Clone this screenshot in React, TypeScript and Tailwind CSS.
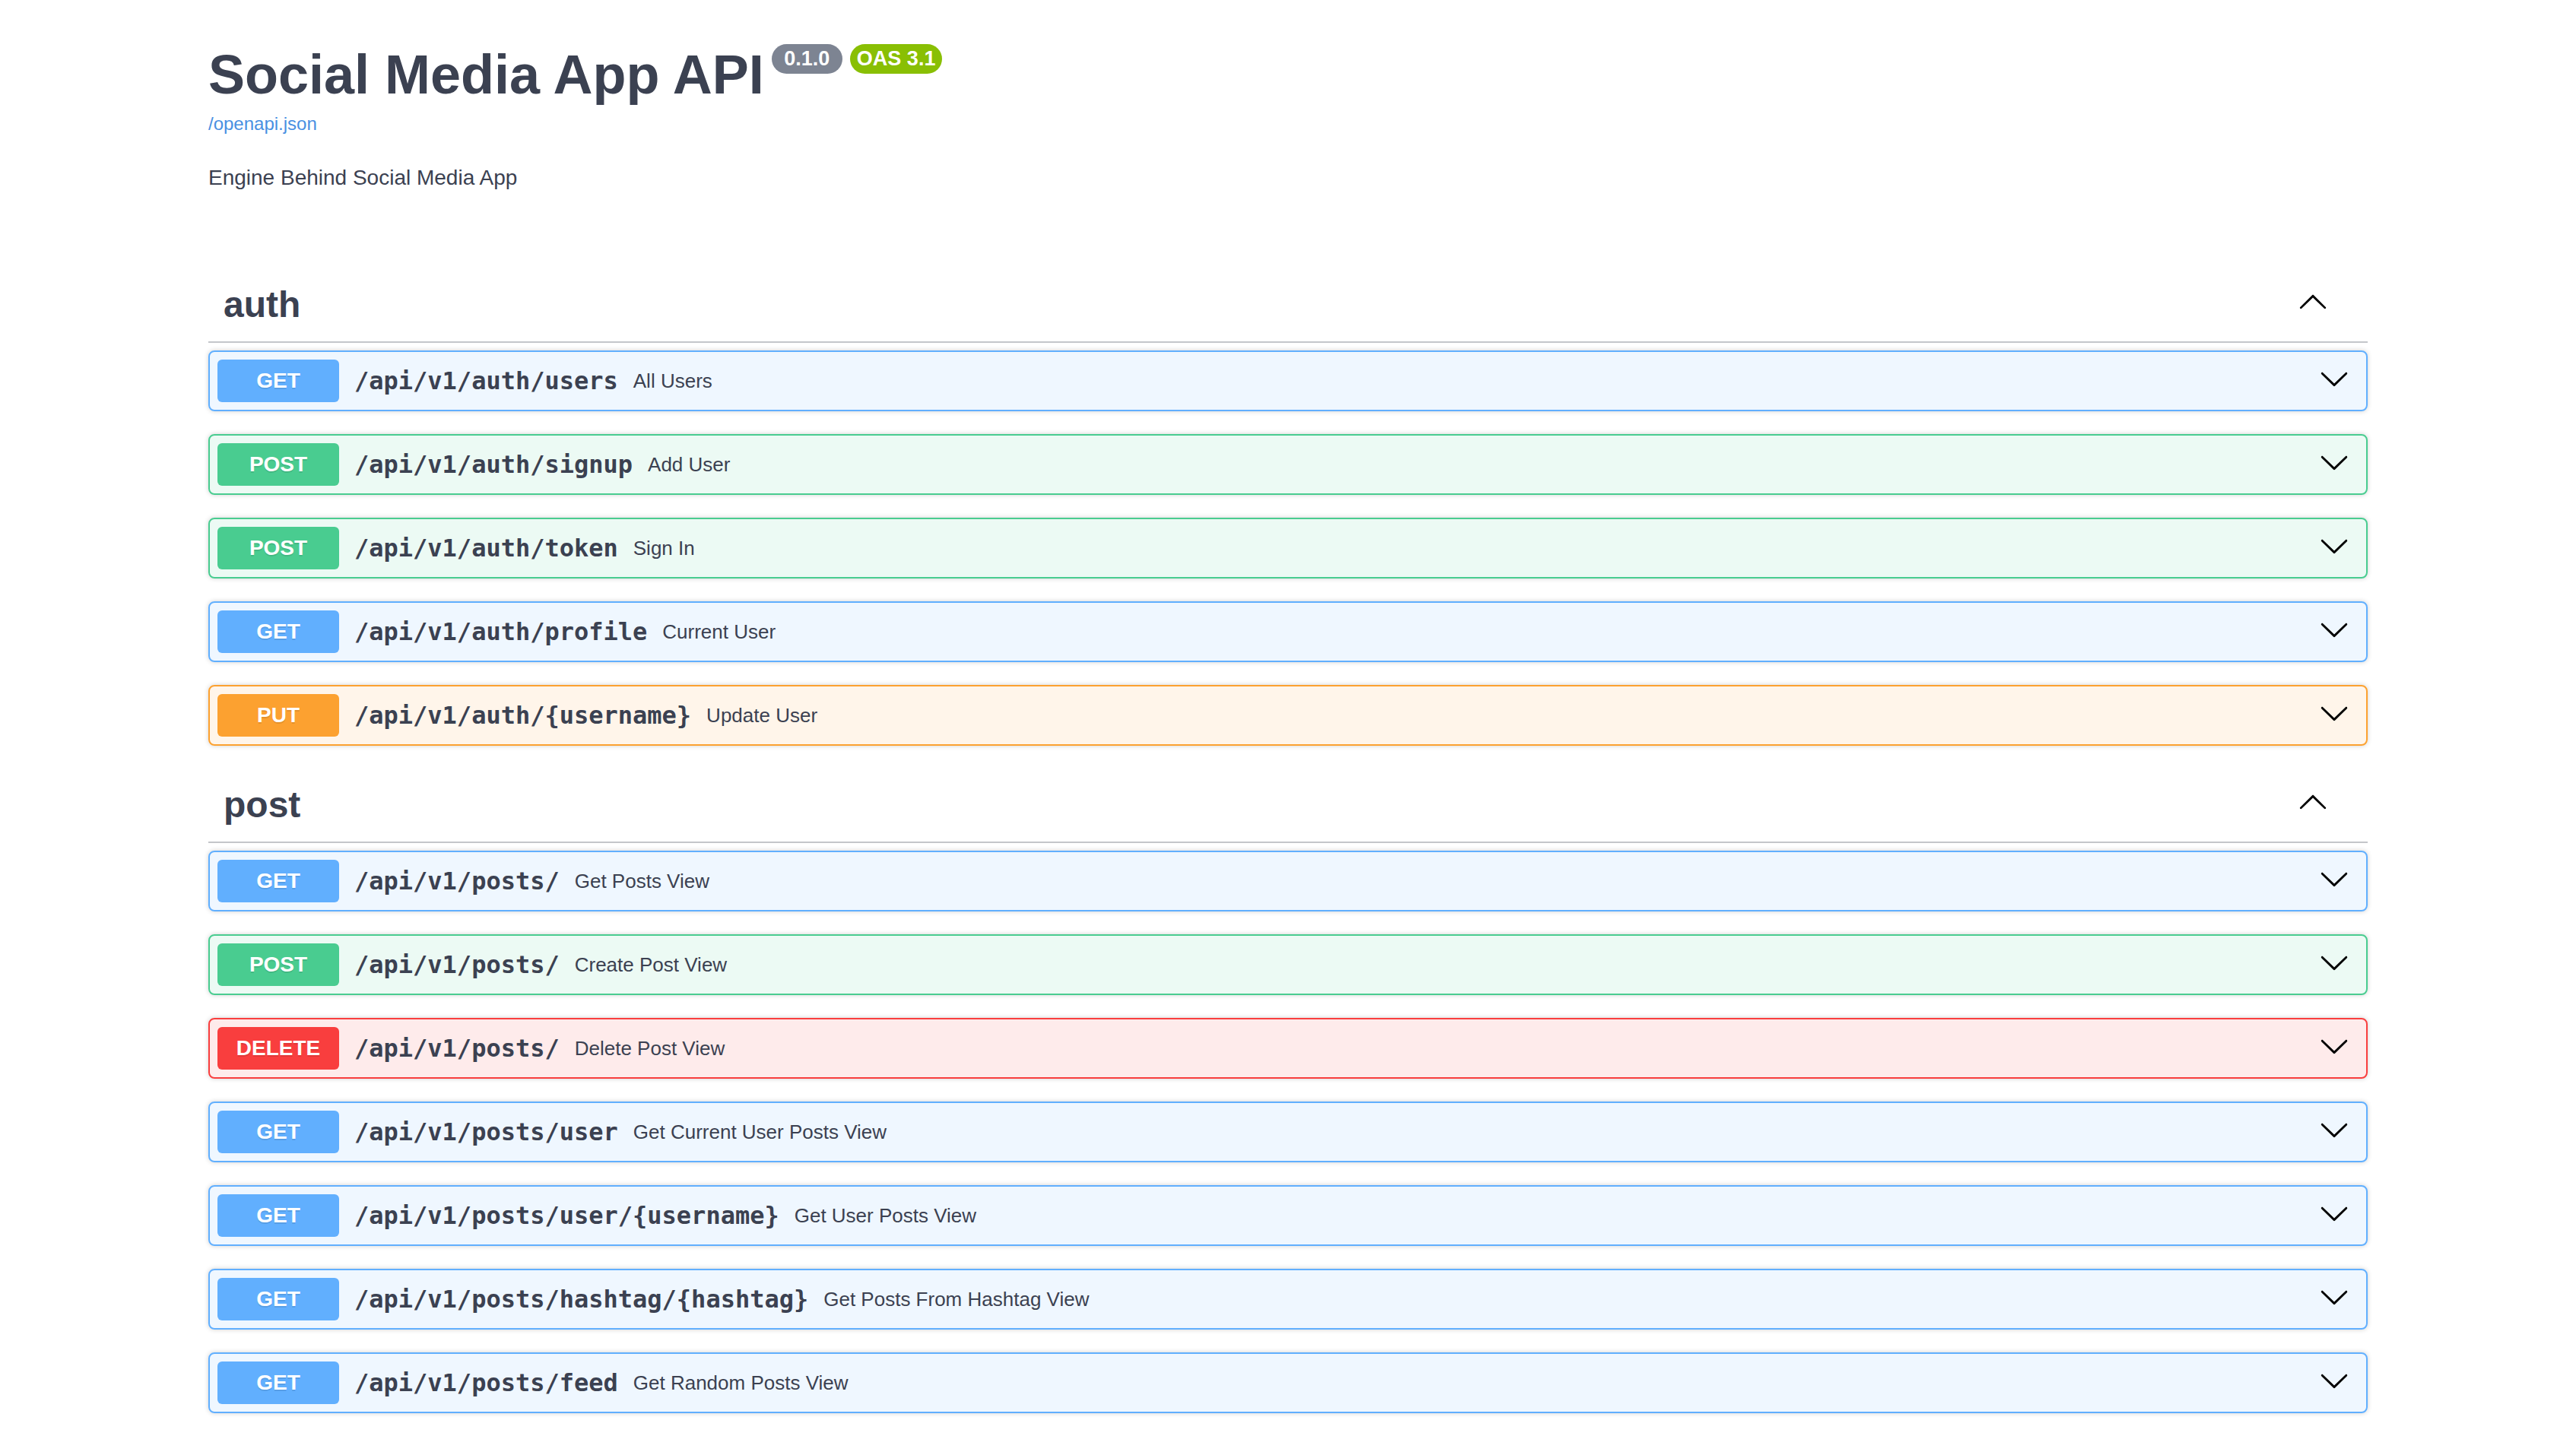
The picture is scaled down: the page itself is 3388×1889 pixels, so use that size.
import React from "react";

type Method = "GET" | "POST" | "PUT" | "DELETE";

const blockCls: Record<Method, string> = {
  GET: "border-[#61affe] bg-[rgba(97,175,254,0.1)]",
  POST: "border-[#49cc90] bg-[rgba(73,204,144,0.1)]",
  PUT: "border-[#fca130] bg-[rgba(252,161,48,0.1)]",
  DELETE: "border-[#f93e3e] bg-[rgba(249,62,62,0.1)]",
};

const badgeCls: Record<Method, string> = {
  GET: "bg-[#61affe]",
  POST: "bg-[#49cc90]",
  PUT: "bg-[#fca130]",
  DELETE: "bg-[#f93e3e]",
};

type Op = { m: Method; path: string; desc: string };

const sections: { tag: string; ops: Op[] }[] = [
  {
    tag: "auth",
    ops: [
      { m: "GET", path: "/api/v1/auth/users", desc: "All Users" },
      { m: "POST", path: "/api/v1/auth/signup", desc: "Add User" },
      { m: "POST", path: "/api/v1/auth/token", desc: "Sign In" },
      { m: "GET", path: "/api/v1/auth/profile", desc: "Current User" },
      { m: "PUT", path: "/api/v1/auth/{username}", desc: "Update User" },
    ],
  },
  {
    tag: "post",
    ops: [
      { m: "GET", path: "/api/v1/posts/", desc: "Get Posts View" },
      { m: "POST", path: "/api/v1/posts/", desc: "Create Post View" },
      { m: "DELETE", path: "/api/v1/posts/", desc: "Delete Post View" },
      { m: "GET", path: "/api/v1/posts/user", desc: "Get Current User Posts View" },
      { m: "GET", path: "/api/v1/posts/user/{username}", desc: "Get User Posts View" },
      { m: "GET", path: "/api/v1/posts/hashtag/{hashtag}", desc: "Get Posts From Hashtag View" },
      { m: "GET", path: "/api/v1/posts/feed", desc: "Get Random Posts View" },
    ],
  },
];

function ArrowDown() {
  return (
    <svg width="40" height="40" viewBox="0 0 20 20" className="block" fill="#000">
      <path d="M17.418 6.109c.272-.268.709-.268.979 0s.271.701 0 .969l-7.908 7.83c-.27.268-.707.268-.979 0l-7.908-7.83c-.27-.268-.27-.701 0-.969.271-.268.709-.268.979 0L10 13.25l7.418-7.141z" />
    </svg>
  );
}

function ArrowUp() {
  return (
    <svg width="40" height="40" viewBox="0 0 20 20" className="block" fill="#000">
      <path d="M17.418 14.908c.272.268.709.268.979 0s.271-.701 0-.969l-7.908-7.83c-.27-.268-.707-.268-.979 0l-7.908 7.83c-.27.268-.27.701 0 .969.271.268.709.268.979 0L10 7.767l7.418 7.141z" />
    </svg>
  );
}

function OpBlock({ op }: { op: Op }) {
  return (
    <div
      className={`mb-[30px] rounded-[8px] border-2 shadow-[0_0_6px_rgba(0,0,0,0.19)] ${blockCls[op.m]}`}
    >
      <div className="flex items-center p-[10px]">
        <span
          className={`min-w-[160px] rounded-[6px] py-[12px] text-center text-[28px] font-bold leading-[32px] text-white [text-shadow:0_2px_0_rgba(0,0,0,0.1)] ${badgeCls[op.m]}`}
        >
          {op.m}
        </span>
        <span className="flex-none px-[20px] font-['DejaVu_Sans_Mono',monospace] text-[32px] font-semibold leading-[40px] text-[#3b4151]">
          {op.path}
        </span>
        <span className="flex-1 text-[26px] leading-[30px] text-[#3b4151]">{op.desc}</span>
        <span className="mb-[7px] px-[12px]">
          <ArrowDown />
        </span>
      </div>
    </div>
  );
}

export default function App() {
  return (
    <div className="min-h-screen bg-white font-['Liberation_Sans',Arial,sans-serif] text-[#3b4151]">
      <div className="mx-auto max-w-[2920px] px-[40px]">
        <div className="pt-[56px]">
          <div className="flex items-start">
            <h2 className="m-0 text-[72px] font-bold leading-[84px] text-[#3b4151]">
              Social Media App API
            </h2>
            <span className="ml-[10px] mt-[2px] whitespace-pre rounded-full bg-[#7d8492] px-[9px] py-[4px] text-[27px] font-bold leading-[31px] text-white">
              {" 0.1.0 "}
            </span>
            <span className="ml-[10px] mt-[2px] rounded-full bg-[#89bf04] px-[9px] py-[4px] text-[27px] font-bold leading-[31px] text-white">
              OAS 3.1
            </span>
          </div>
          <div className="mt-[9px] text-[24px] leading-[28px] text-[#4990e2]">/openapi.json</div>
          <p className="mt-[41px] text-[28px] leading-[32px] text-[#3b4151]">
            Engine Behind Social Media App
          </p>
        </div>

        <div className="mt-[103px]">
          {sections.map((s) => (
            <div key={s.tag} className="flex flex-col">
              <h3 className="mb-[10px] flex items-center border-b-2 border-[rgba(59,65,81,0.3)] py-[20px] pl-[20px] pr-[40px] text-[48px] font-bold leading-[56px] text-[#3b4151]">
                <span className="flex-1">{s.tag}</span>
                <span className="mb-[10px] px-[12px]">
                  <ArrowUp />
                </span>
              </h3>
              {s.ops.map((op, i) => (
                <OpBlock key={i} op={op} />
              ))}
            </div>
          ))}
          <div className="h-[2px] rounded-t-[8px] bg-[#eeeeef]" />
        </div>
      </div>
    </div>
  );
}
